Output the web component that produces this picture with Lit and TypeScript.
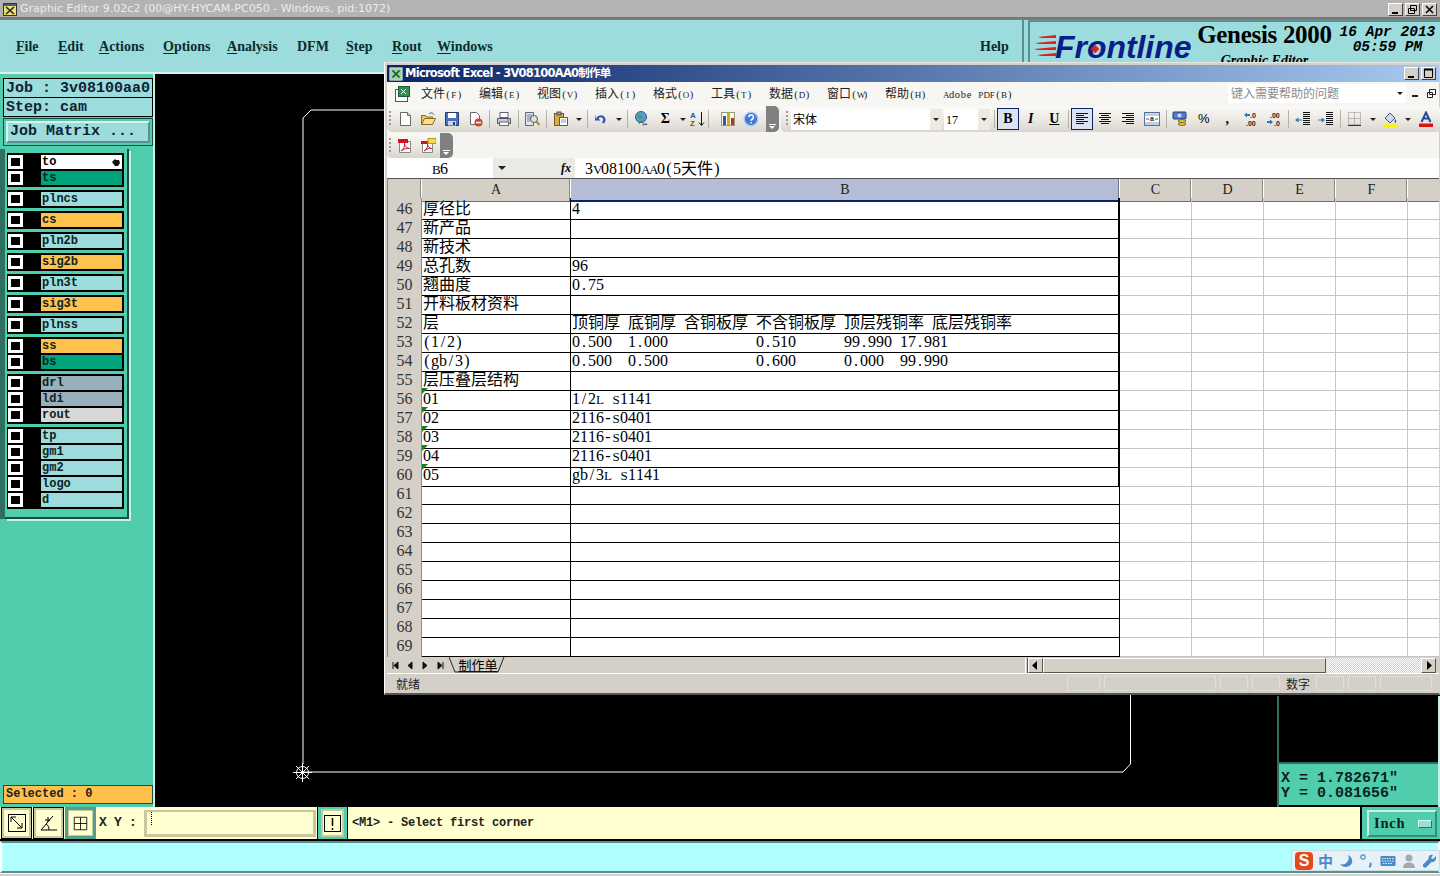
import { css, html, LitElement, svg } from "lit";
import { customElement } from "lit/decorators.js";

const CJK = /[\u3000-\u9fff\uff00-\uffef]+/g;

// split mixed text, latin goes in half-width cells like the sheet's bitmap font
function runs(text: string) {
	const out: unknown[] = [];
	// capitals are too wide for a half cell at full size
	const latin = (s: string) =>
		[...s].map((c) => html`<span class="ch ${/[A-Z]/.test(c) ? "cap" : ""}">${c}</span>`);
	let last = 0;
	for (const m of text.matchAll(CJK)) {
		if (m.index! > last) out.push(latin(text.slice(last, m.index)));
		out.push(html`<span>${m[0]}</span>`);
		last = m.index! + m[0].length;
	}
	if (last < text.length) out.push(latin(text.slice(last)));
	return out;
}

type Layer = { name: string; color: string };

const LAYER_GROUPS: Layer[][] = [
	[{ name: "to", color: "white" }, { name: "ts", color: "green" }],
	[{ name: "plncs", color: "cyan" }],
	[{ name: "cs", color: "orange" }],
	[{ name: "pln2b", color: "cyan" }],
	[{ name: "sig2b", color: "orange" }],
	[{ name: "pln3t", color: "cyan" }],
	[{ name: "sig3t", color: "orange" }],
	[{ name: "plnss", color: "cyan" }],
	[{ name: "ss", color: "orange" }, { name: "bs", color: "green" }],
	[{ name: "drl", color: "slate" }, { name: "ldi", color: "slate" }, { name: "rout", color: "silver" }],
	[
		{ name: "tp", color: "cyan" },
		{ name: "gm1", color: "cyan" },
		{ name: "gm2", color: "cyan" },
		{ name: "logo", color: "cyan" },
		{ name: "d", color: "cyan" },
	],
];

const SHEET_ROWS: [number, string, string][] = [
	[46, "厚径比", "4"],
	[47, "新产品", ""],
	[48, "新技术", ""],
	[49, "总孔数", "96"],
	[50, "翘曲度", "0.75"],
	[51, "开料板材资料", ""],
	[52, "层", "顶铜厚 底铜厚 含铜板厚 不含铜板厚 顶层残铜率 底层残铜率"],
	[53, "(1/2)", "0.500  1.000           0.510      99.990 17.981"],
	[54, "(gb/3)", "0.500  0.500           0.600      0.000  99.990"],
	[55, "层压叠层结构", ""],
	[56, "01", "1/2L S1141"],
	[57, "02", "2116-S0401"],
	[58, "03", "2116-S0401"],
	[59, "04", "2116-S0401"],
	[60, "05", "gb/3L S1141"],
	[61, "", ""],
	[62, "", ""],
	[63, "", ""],
	[64, "", ""],
	[65, "", ""],
	[66, "", ""],
	[67, "", ""],
	[68, "", ""],
	[69, "", ""],
	[70, "", ""],
];

const ICONS: Record<string, unknown> = {
	book: svg`<rect x="1.500" y="3.500" width="12" height="12" fill="#fff" stroke="#555"/><rect x="4.500" y="0.500" width="11" height="10" fill="#2f8f4f" stroke="#1c5a30"/><path d="M7 3l5 5M12 3l-5 5" stroke="#fff"/>`,
	new: svg`<path d="M3.500 1.500h7l3 3v10h-10z" fill="#fff" stroke="#666"/><path d="M10.500 1.500v3h3" fill="#ddd" stroke="#666"/>`,
	open: svg`<path d="M1.500 13.500v-9h4l1 1.500h6v7.500z" fill="#e8c860" stroke="#8a6d1f"/><path d="M1.500 13.500l3-6h11l-3 6z" fill="#f7e08e" stroke="#8a6d1f"/><path d="M9 3c2-2 4-1 5 1" fill="none" stroke="#2a55a8"/>`,
	save: svg`<path d="M1.500 1.500h13v13h-13z" fill="#4a6fc0" stroke="#23386f"/><rect x="4" y="2" width="8" height="5" fill="#fff"/><rect x="4" y="10" width="8" height="4.500" fill="#c9d5ef"/><rect x="9" y="11" width="2" height="3" fill="#23386f"/>`,
	perm: svg`<path d="M3.500 1.500h6l3 3v9h-9z" fill="#fff" stroke="#667"/><circle cx="11.500" cy="11.500" r="4" fill="#d8402a"/><rect x="9" y="10.800" width="5" height="1.500" fill="#fff"/>`,
	print: svg`<rect x="4" y="1.500" width="8" height="5" fill="#fff" stroke="#667"/><path d="M1.500 7.500h13v5h-13z" fill="#c8ccd4" stroke="#556"/><rect x="3.500" y="11" width="9" height="3.500" fill="#fff" stroke="#667"/><rect x="11" y="8.500" width="2" height="1" fill="#3a9a3a"/>`,
	preview: svg`<path d="M1.500 1.500h8v13h-8z" fill="#dfe5f2" stroke="#667"/><path d="M3 4h5M3 6h5M3 8h5M3 10h3" stroke="#6b7fa8"/><circle cx="10" cy="8" r="3.500" fill="#cfe6fa" stroke="#7a5a20"/><path d="M12.500 10.500l3 3.500" stroke="#b48a2a" stroke-width="2"/>`,
	paste: svg`<rect x="1.500" y="2.500" width="9" height="12" fill="#d9a94a" stroke="#7a5a20"/><rect x="4" y="1" width="4" height="3" fill="#999" stroke="#555"/><path d="M6.500 6.500h8v8h-8z" fill="#fff" stroke="#3b5a9a"/><path d="M8 9h5M8 11h5" stroke="#8a98b8"/>`,
	undo: svg`<path d="M3 8.500a5 5 0 0 1 9-2c1 2 .5 4-1 6l-2-1c1.500-2 1.500-3.500.5-4.500a3 3 0 0 0-4 .5l2 2H2V3z" fill="#2a55b8"/>`,
	web: svg`<circle cx="7" cy="6" r="5.500" fill="#5a9ad8" stroke="#2d5d92"/><path d="M4 3c2 0 2 2 4 2s0 3-2 3-2-2-2-5zM9 1.500c1 1 3 1.500 3 3" fill="#4aa050"/><path d="M5 12.500c1-2 3-2 4-.500M9 14.500c1-2 3-2 4-.500" fill="none" stroke="#5a6a7a" stroke-width="1.600"/>`,
	sort: svg`<text x="0" y="7" font-size="8" font-family="Liberation Sans" font-weight="700" fill="#2a55a8">A</text><text x="0" y="15" font-size="8" font-family="Liberation Sans" font-weight="700" fill="#b03428">Z</text><path d="M11.500 1v13M9 11.500l2.500 3 2.500-3" fill="none" stroke="#111"/>`,
	chart: svg`<rect x="1.500" y="1.500" width="13" height="13" fill="#fffbe0" stroke="#9a9a80"/><rect x="3" y="5" width="3" height="9" fill="#3456b0"/><rect x="7" y="2" width="3" height="12" fill="#d8a82a"/><rect x="11" y="7" width="3" height="7" fill="#b03428"/>`,
	help: svg`<circle cx="8" cy="8" r="6.800" fill="#3f78d8" stroke="#a9c6ee" stroke-width="1.500"/><path d="M5.800 6.300a2.300 2.300 0 1 1 3.300 2c-.8.400-1.100.8-1.100 1.500M8 11v1.500" fill="none" stroke="#fff" stroke-width="1.500"/>`,
	pdf: svg`<path d="M2.500 3.500h11v11h-11z" fill="#fff" stroke="#888"/><rect x="1" y="1" width="10" height="4" fill="#d8101c"/><path d="M4 13c3-2 4-5 3.500-8 0 3 2 5 5 5.500-3-.5-6 .5-8.500 2.500z" fill="none" stroke="#c8202c"/>`,
	pdfc: svg`<path d="M2.500 4.500h10v10h-10z" fill="#fff" stroke="#888"/><rect x="1" y="3" width="8" height="3" fill="#d8101c"/><rect x="8" y="0.500" width="8" height="5" fill="#f6d94a" stroke="#b09a20"/><path d="M4 13c3-2 4-4 3.500-7 0 3 2 4 4 4.500-2-.5-5 .5-7.500 2.500z" fill="none" stroke="#c8202c"/>`,
	left: svg`<path d="M2 2.500h12M2 4.500h8M2 6.500h12M2 8.500h8M2 10.500h12M2 12.500h8" stroke="#111"/>`,
	center: svg`<path d="M2 2.500h12M4 4.500h8M2 6.500h12M4 8.500h8M2 10.500h12M4 12.500h8" stroke="#111"/>`,
	right: svg`<path d="M2 2.500h12M6 4.500h8M2 6.500h12M6 8.500h8M2 10.500h12M6 12.500h8" stroke="#111"/>`,
	merge: svg`<rect x="0.500" y="1.500" width="15" height="13" fill="#bcd0e8" stroke="#5a7498"/><rect x="1" y="5" width="14" height="6" fill="#fff"/><path d="M2 8h3M14 8h-3" stroke="#2a55a8"/><text x="6" y="10" font-size="7" font-family="Liberation Sans" fill="#222">a</text>`,
	currency: svg`<rect x="1" y="1" width="13" height="7" rx="1" fill="#4f7fd0" stroke="#23386f"/><circle cx="7.500" cy="4.500" r="2" fill="#cfe0fa"/><ellipse cx="10" cy="10" rx="4" ry="1.500" fill="#e8bf3a" stroke="#8a6d1f"/><ellipse cx="10" cy="13" rx="4" ry="1.500" fill="#e8bf3a" stroke="#8a6d1f"/>`,
	incdec: svg`<path d="M1 4l3-2.500V3h3v2H4v1.500z" fill="#2a75c8"/><text x="7" y="7" font-size="7" font-family="Liberation Sans" font-weight="700" fill="#222">.0</text><text x="3" y="15" font-size="7" font-family="Liberation Sans" font-weight="700" fill="#222">.00</text>`,
	decdec: svg`<text x="4" y="7" font-size="7" font-family="Liberation Sans" font-weight="700" fill="#222">.00</text><path d="M1 10h3V8.500l3 2.500-3 2.500V12H1z" fill="#2a75c8"/><text x="8" y="15" font-size="7" font-family="Liberation Sans" font-weight="700" fill="#222">.0</text>`,
	outdent: svg`<path d="M8 1.500h7M8 3.500h7M8 5.500h7M8 7.500h7M8 9.500h7M8 11.500h7M8 13.500h7" stroke="#111"/><path d="M7 8.500H3.500v-2L0 9l3.500 2.500v-2H7z" fill="#2a75c8"/>`,
	indent: svg`<path d="M8 1.500h7M8 3.500h7M8 5.500h7M8 7.500h7M8 9.500h7M8 11.500h7M8 13.500h7" stroke="#111"/><path d="M0 8.500h3.500v-2L7 9l-3.500 2.500v-2H0z" fill="#2a75c8"/>`,
	borders: svg`<path d="M1.500 1.500h12v12h-12zM7.500 1.500v12M1.500 7.500h12" fill="none" stroke="#888" stroke-dasharray="1 1"/><path d="M1 14.500h13" stroke="#333"/>`,
	fill: svg`<path d="M3 7l5-5 5 5-5 5z" fill="#cfd8e8" stroke="#3a5a90"/><path d="M13 8c1 1.500 2 2.500 1 3.500s-2-1-1-3.500z" fill="#2a55a8"/><rect x="1" y="13" width="15" height="3" fill="#f5f020"/>`,
	color: svg`<path d="M3.500 11L8 1.500 12.500 11M5.500 7.500h5" fill="none" stroke="#234a9a" stroke-width="2"/><rect x="1" y="12.500" width="14" height="3.500" fill="#e01010"/>`,
};

function icon(name: string) {
	return html`<svg class="ic" viewBox="0 0 16 16">${ICONS[name]}</svg>`;
}

const tool = (name: string) => html`<span class="tb">${icon(name)}</span>`;
const drop = html`<span class="drop"></span>`;
const sep = html`<span class="sep"></span>`;

const minGlyph = html`<svg viewBox="0 0 13 11"><rect x="3" y="8" width="6" height="2" fill="#000" /></svg>`;
const maxGlyph = html`<svg viewBox="0 0 13 11"><path d="M2.500 1.500h8v8h-8z" fill="none" stroke="#000" /><path d="M2 1.500h9" stroke="#000" stroke-width="2" /></svg>`;
const restoreGlyph = html`<svg viewBox="0 0 13 11"><path d="M4.500 1.500h6v5h-6zM2.500 4.500h6v5h-6z" fill="#d4d0c8" stroke="#000" /></svg>`;
const closeGlyph = html`<svg viewBox="0 0 13 11"><path d="M3 2l7 7M10 2l-7 7" stroke="#000" stroke-width="1.500" /></svg>`;

@customElement("app-root")
export class AppRoot extends LitElement {
	static override styles = css`
		:host {
			display: block;
			position: relative;
			width: 1440px;
			height: 876px;
			overflow: hidden;
			background: #d4d0c8;
			font-family: "Liberation Mono", monospace;
		}

		/* Motif shell */
		.title {
			height: 16px;
			background: #b3b3b3;
			border-bottom: 2px solid #777;
			display: flex;
			align-items: center;
			padding: 1px 0 0 3px;
			gap: 3px;
			color: #ececec;
			font: 11.050px/16px "DejaVu Sans", sans-serif;
			box-sizing: content-box;
		}
		.title .sp { flex: 1; }
		.wbtn {
			width: 15px;
			height: 13px;
			box-sizing: border-box;
			background: #d4d0c8;
			border: 1px solid;
			border-color: #fff #444 #444 #fff;
			display: block;
			flex: none;
		}
		.wbtn svg { display: block; width: 13px; height: 11px; }
		.wbtns { display: flex; gap: 2px; padding-right: 3px; }

		.menu {
			height: 52px;
			display: flex;
			background: #9cdcdc;
			border-bottom: 2px solid #d8f2f2;
			border-top: 1px solid #5c9090;
			box-sizing: content-box;
		}
		.menu-items {
			flex: 1;
			display: flex;
			padding: 17px 0 0 16px;
			font: 700 14px/20px "Liberation Serif", serif;
			color: #0c2c2c;
			border-right: 2px solid #5c9090;
			border-left: 2px solid #d8f2f2;
			margin-left: -2px;
		}
		.menu-items span { display: block; }
		.menu-items u { text-underline-offset: 2px; }
		.logo {
			width: 412px;
			margin-left: 4px;
			border-left: 2px solid #5c9090;
			border-top: 2px solid #5c9090;
			box-sizing: border-box;
			display: flex;
			overflow: hidden;
			padding: 3px 0 0 4px;
			color: #000;
		}
		.brand {
			display: flex;
			align-items: center;
			height: 42px;
			margin-top: 1px;
			position: relative;
		}
		.brand b {
			font: italic 700 32px/42px "Liberation Sans", sans-serif;
			color: #0c1d8a;
			letter-spacing: -0.05px;
		}
		.brand svg { width: 22px; height: 24px; margin-right: -1px; }
		.brand .dia {
			position: absolute;
			left: 58px;
			top: 20px;
			width: 6px;
			height: 6px;
			background: #e0201c;
			transform: rotate(45deg);
		}
		.gen { margin-left: 5px; text-align: center; width: 136px; margin-top: -3px; }
		.gen .big { font: 25px/26px "Liberation Serif", serif; white-space: nowrap; font-weight: 700; letter-spacing: -0.3px; }
		.gen .small { font: italic 700 14px/16px "Liberation Serif", serif; margin-top: 5px; }
		.date {
			margin-left: 6px;
			font: italic 700 14.500px/15px "Liberation Mono", monospace;
			text-align: center;
			white-space: pre;
			width: 98px;
		}

		.body { height: 733px; display: flex; }
		.side {
			width: 155px;
			background: #50cdac;
			box-sizing: border-box;
			border-right: 2px solid #c8f0e4;
			display: flex;
			flex-direction: column;
			padding: 4px 0 3px 3px;
		}
		.job {
			width: 150px;
			box-sizing: border-box;
			border: 1px solid #000;
			background: #9cdcdc;
			font: 700 15px/19px "Liberation Mono", monospace;
			color: #123;
			white-space: pre;
		}
		.job div { height: 18px; padding-left: 2px; }
		.job div + div { border-top: 1px solid #000; }
		.matrix {
			width: 150px;
			height: 28px;
			margin-top: 1px;
			box-sizing: border-box;
			border: 1px solid #174f45;
			padding: 2px;
			background: #50cdac;
		}
		.matrix div {
			height: 22px;
			box-sizing: border-box;
			background: #9cdcdc;
			border: 2px solid;
			border-color: #d8f2f2 #5c9090 #5c9090 #d8f2f2;
			font: 700 15px/18px "Liberation Mono", monospace;
			padding-left: 2px;
			color: #123;
			white-space: pre;
		}
		.layers {
			width: 124px;
			height: 370px;
			margin: 3px 0 0 2px;
			box-sizing: border-box;
			border-right: 2px solid #174f45;
			border-bottom: 2px solid #174f45;
			padding: 4px 0 0 2px;
			display: flex;
			flex-direction: column;
			gap: 3px;
			box-shadow: 2px 2px 0 #c8f0e4, -5px 0 0 #2f6f60;
		}
		.group { width: 117px; background: #000; padding-top: 2px; box-sizing: border-box; }
		.layer { height: 16px; display: flex; }
		.chk {
			width: 15px;
			height: 14px;
			margin-left: 1px;
			box-sizing: border-box;
			background: #000;
			border: 3px solid #fff;
		}
		.lname {
			margin-left: 18px;
			width: 81px;
			height: 14px;
			box-sizing: border-box;
			font: 700 12px/14px "Liberation Mono", monospace;
			color: #0b2222;
			padding-left: 1px;
			position: relative;
		}
		.lname.cyan { background: #9cdcdc; }
		.lname.orange { background: #ffc34d; }
		.lname.green { background: #00a47c; }
		.lname.white { background: #fff; color: #000; }
		.lname.slate { background: #98b0bc; }
		.lname.silver { background: #d8d8d8; }
		.lname svg { position: absolute; right: 2px; top: 3px; width: 8px; height: 8px; }
		.selected {
			margin-top: auto;
			width: 150px;
			height: 19px;
			box-sizing: border-box;
			background: #ffc04c;
			border: 1px solid #174f45;
			font: 700 12px/17px "Liberation Mono", monospace;
			color: #222;
			padding-left: 2px;
			white-space: pre;
		}

		.canvas { flex: 1; background: #000; position: relative; }
		.canvas > svg { position: absolute; inset: 0; width: 100%; height: 100%; }
		.readout {
			position: absolute;
			right: 0;
			bottom: 0;
			width: 163px;
			height: 111px;
			box-sizing: border-box;
			border-left: 2px solid #2f6f60;
			border-right: 2px solid #c8f0e4;
			display: flex;
			flex-direction: column;
			justify-content: flex-end;
			background: #000;
			padding-bottom: 2px;
		}
		.readout div {
			height: 43px;
			box-sizing: border-box;
			background: #50cdac;
			border-top: 2px solid #2f6f60;
			padding: 7px 0 0 2px;
			font: 700 15px/15px "Liberation Mono", monospace;
			color: #0b2222;
			white-space: pre;
		}

		.status {
			height: 32px;
			display: flex;
			background: #ffffd0;
			font: 700 12px/32px "Liberation Mono", monospace;
			color: #222;
			white-space: pre;
			align-items: stretch;
		}
		.mbtn {
			width: 31px;
			margin-left: 1px;
			box-sizing: border-box;
			background: #ffffd0;
			border: 3px solid #c8c8a0;
			outline: 1px solid #000;
			outline-offset: -1px;
			padding: 2px;
			display: flex;
			align-items: center;
			justify-content: center;
		}
		.mbtn svg { width: 18px; height: 18px; }
		.mbtn.active { border: 4px solid #c8c8a0; outline: 3px solid #50a090; outline-offset: -3px; padding: 3px; }
		.mbtn.active svg { width: 15px; height: 15px; }
		.xy { width: 47px; font: 700 13px/32px "Liberation Mono", monospace; padding-left: 3px; box-sizing: border-box; letter-spacing: -0.3px; }
		.field {
			width: 172px;
			margin-left: 1px;
			box-sizing: border-box;
			border: 3px solid #c8c8a0;
			border-top: 2px solid #c8c8a0;
			margin-top: 3px;
			margin-bottom: 2px;
			position: relative;
		}
		.field::before {
			content: "";
			position: absolute;
			left: 4px;
			top: 0;
			width: 1px;
			height: 14px;
			background: repeating-linear-gradient(#000 0 1px, transparent 1px 2px);
		}
		.bang {
			width: 31px;
			margin-left: 1px;
			box-sizing: border-box;
			background: #50cdac;
			padding: 2px 3px;
			display: flex;
			border-left: 1px solid #000;
			border-right: 1px solid #000;
		}
		.bang span {
			flex: 1;
			background: #ffffd0;
			display: flex;
			align-items: center;
			justify-content: center;
			border: 2px solid #c8c8a0;
			box-sizing: border-box;
		}
		.bang svg { width: 17px; height: 17px; }
		.msg { flex: 1; padding-left: 4px; letter-spacing: -0.2px; }
		.units {
			width: 80px;
			background: #50cdac;
			box-sizing: border-box;
			border-left: 2px solid #000;
			padding: 3px 3px 2px 5px;
		}
		.units div {
			height: 27px;
			box-sizing: border-box;
			border: 2px solid;
			border-color: #c8f0e4 #2f8f78 #2f8f78 #c8f0e4;
			font: 700 14.500px/23px "Liberation Serif", serif;
			letter-spacing: 0.8px;
			color: #0b2222;
			display: flex;
			justify-content: space-between;
			align-items: center;
			padding: 0 3px 0 5px;
		}
		.units i { display: block; width: 12px; height: 6px; background: #9cdcdc; border: 1px solid; border-color: #e0f8f0 #2f6f60 #2f6f60 #e0f8f0; }

		.strip {
			height: 34px;
			box-sizing: border-box;
			border-top: 2px solid #000;
			background: #b0ffff;
			position: relative;
		}
		.strip-in {
			height: 100%;
			box-sizing: border-box;
			border: 2px solid;
			border-color: #5c9090 #fff #5c9090 #fff;
			box-shadow: 0 1px 0 #fff;
		}
		.ime {
			position: absolute;
			right: 0;
			top: 9px;
			width: 149px;
			height: 21px;
			box-sizing: border-box;
			background: #e6f1f8;
			border: 1px solid #cfdbe4;
			display: flex;
			align-items: center;
			gap: 5px;
			padding-left: 3px;
			color: #4a8ac8;
			font: 700 15px/20px "Noto Sans CJK SC", sans-serif;
		}
		.ime .s {
			width: 18px;
			height: 18px;
			background: #e24a1e;
			border-radius: 4px;
			color: #fff;
			font: 700 16px/18px "Liberation Sans", sans-serif;
			text-align: center;
		}
		.ime svg { width: 16px; height: 16px; }

		/* Excel window */
		.excel {
			position: absolute;
			left: 384px;
			top: 62px;
			width: 1056px;
			height: 633px;
			box-sizing: border-box;
			background: #d4d0c8;
			border: 1px solid #d4d0c8;
			border-top-color: #e8e6e0;
			border-left-color: #fff;
			border-bottom: 2px solid #555;
			padding: 2px 0 0 2px;
			display: flex;
			flex-direction: column;
			font-family: "Liberation Serif", "Noto Sans CJK SC", serif;
			color: #000;
		}
		.ch { display: inline-block; width: 8px; text-align: center; white-space: pre; }
		.ch.cap { font-size: 13px; }
		.ic { width: 16px; height: 16px; display: block; }
		.xtitle {
			height: 17px;
			flex: none;
			background: linear-gradient(90deg, #0a246a, #a6caf0);
			display: flex;
			align-items: center;
			padding-left: 2px;
			gap: 2px;
			color: #fff;
			font: 700 11.500px/17px "DejaVu Sans", "Noto Sans CJK SC", sans-serif;
			letter-spacing: -0.750px;
		}
		.xtitle .ic { width: 14px; height: 14px; }
		.xtitle .sp { flex: 1; }
		.xtitle .gapr { width: 1px; }
		.xmenu {
			height: 23px;
			flex: none;
			background: #f7f6f3;
			display: flex;
			align-items: center;
			padding-left: 3px;
			position: relative;
			font: 12px/23px "Noto Sans CJK SC", sans-serif;
			color: #222;
		}
		.xmenu .bookic { width: 20px; margin-right: 7px; margin-left: 4px; }
		.xmenu .it { width: 58px; flex: none; white-space: pre; }
		.xmenu .ch { width: 5.800px; font: 10.500px/23px "Liberation Serif", serif; }
		.xmenu .ch.cap { font-size: 9px; }
		.ask {
			position: absolute;
			left: 841px;
			top: 2px;
			width: 178px;
			height: 19px;
			background: #fff;
			color: #8a8a8a;
			font: 12px/18px "Noto Sans CJK SC", sans-serif;
			padding-left: 3px;
			box-sizing: border-box;
		}
		.mdi { position: absolute; left: 1010px; top: 4px; display: flex; gap: 9px; align-items: center; height: 14px; }
		.bars {
			height: 28px;
			flex: none;
			background: #f5f4f0;
			display: flex;
			gap: 2px;
			padding-top: 1px;
			box-sizing: border-box;
		}
		.bar {
			height: 26px;
			display: flex;
			align-items: center;
			background: linear-gradient(#fafaf8, #e6e3dc 70%, #d8d5cd);
			border-radius: 5px;
			padding-left: 2px;
			flex: none;
			box-sizing: border-box;
		}
		.grip { width: 2px; height: 16px; margin-right: 2px; flex: none; background: repeating-linear-gradient(#9a9a9a 0 2px, transparent 2px 4px); }
		.tb { width: 23.500px; height: 22px; display: flex; align-items: center; justify-content: center; flex: none; box-sizing: border-box; font: 700 14px/20px "Liberation Serif", serif; }
		.tb.on { width: 22px; border: 1px solid #0a246a; background: #dbe2f0; }
		.tb.nar { width: 17px; }
		.drop { width: 0; height: 0; border: 3px solid transparent; border-top: 3px solid #222; border-bottom: 0; margin: 0 3px; flex: none; }
		.sep { width: 1px; height: 18px; background: #b4b1a8; margin: 0 2px; flex: none; }
		.more { width: 13px; height: 26px; margin-left: auto; background: #808080; border-radius: 0 5px 5px 0; position: relative; flex: none; }
		.more::after { content: ""; position: absolute; left: 3px; bottom: 7px; width: 7px; height: 1px; background: #fff; }
		.more::before { content: ""; position: absolute; left: 3px; bottom: 3px; border: 3.500px solid transparent; border-top-color: #fff; border-bottom: 0; }
		.combo {
			height: 21px;
			background: #fff;
			display: flex;
			align-items: center;
			justify-content: space-between;
			box-sizing: border-box;
			padding-left: 2px;
			font: 12px/20px "Noto Sans CJK SC", sans-serif;
			flex: none;
			margin-right: 2px;
		}
		.combo .ch { width: 6px; font: 12px/20px "Liberation Serif", serif; }
		.combo .btn { width: 12px; height: 21px; background: #eeeae2; display: flex; align-items: center; justify-content: center; }
		.combo .drop { margin: 0; }
		.bars2 {
			height: 25px;
			flex: none;
			background: #f5f4f0;
			display: flex;
		}
		.bars2 .bar { height: 25px; width: 66px; }
		.fx {
			height: 20px;
			flex: none;
			display: flex;
			background: #ebe9e3;
			font: 16px/21px "Liberation Serif", "Noto Sans CJK SC", serif;
			white-space: pre;
		}
		.fx .name { width: 106px; background: #fff; text-align: center; box-sizing: border-box; }
		.fx .dd { width: 18px; display: flex; align-items: center; justify-content: center; }
		.fx .fn { font: italic 700 12px/21px "Liberation Serif", serif; text-align: right; padding-right: 4px; box-sizing: border-box; width: 64px; }
		.fx .val { flex: 1; background: #fff; padding-left: 10px; }

		.sheet {
			height: 479px;
			flex: none;
			overflow: hidden;
			background: #fff;
			border-top: 1px solid #555;
			border-left: 1px solid #888;
			box-sizing: border-box;
			font: 16px/21px "Liberation Serif", "Noto Sans CJK SC", serif;
		}
		.hdr, .row { display: grid; grid-template-columns: 34px 149px 549px 72px 72px 72px 72px 36px; height: 19px; box-sizing: border-box; }
		.hdr > div {
			background: #d4d0c8;
			text-align: center;
			border-right: 1px solid #fff;
			box-shadow: inset -1px 0 0 #8a8a8a;
			border-bottom: 1px solid #6f6f6f;
			box-sizing: border-box;
			font-size: 14px;
			line-height: 21px;
			color: #222;
		}
		.hdr > .sel { background: #b4bcd6; border-bottom: 2px solid #0a246a; box-shadow: inset -1px 0 0 #6f7690; }
		.row > div { box-sizing: border-box; border-right: 1px solid #c6c6c6; border-bottom: 1px solid #c6c6c6; position: relative; }
		.row > .rh {
			background: #d4d0c8;
			text-align: center;
			border-right: 1px solid #8a8a8a;
			border-bottom: 1px solid #a8a59c;
			color: #333;
		}
		.row > .a, .row > .b { border-bottom: 1px solid #000; border-right: 1px solid #000; padding-left: 1px; white-space: pre; }
		.row > .b.lined { border-right: 2px solid #000; }
		.note::before {
			content: "";
			position: absolute;
			left: 0;
			top: 0;
			border: 3px solid transparent;
			border-top-color: #1a7f1a;
			border-left-color: #1a7f1a;
		}

		.tabs {
			height: 17px;
			flex: none;
			display: flex;
			align-items: center;
			background: #d4d0c8;
			border-bottom: 1px solid #fff;
			box-sizing: border-box;
		}
		.nav { width: 62px; display: flex; align-items: center; padding-left: 4px; box-sizing: border-box; flex: none; }
		.nav svg { width: 54px; height: 9px; }
		.tab {
			width: 58px;
			height: 16px;
			flex: none;
			position: relative;
			font: 13px/15px "Noto Sans CJK SC", sans-serif;
			text-align: center;
			text-decoration: underline;
		}
		.tab svg { position: absolute; inset: 0; width: 58px; height: 16px; }
		.tabfill { width: 518px; flex: none; }
		.splitter { width: 3px; height: 15px; border-left: 1px solid #fff; border-right: 1px solid #555; flex: none; box-sizing: border-box; }
		.arr { width: 15px; height: 15px; box-sizing: border-box; background: #d4d0c8; border: 1px solid; border-color: #fff #555 #555 #fff; display: flex; align-items: center; justify-content: center; flex: none; }
		.arr svg { width: 7px; height: 9px; }
		.thumb { width: 283px; height: 15px; box-sizing: border-box; background: #d4d0c8; border: 1px solid; border-color: #fff #555 #555 #fff; flex: none; }
		.track { width: 95px; height: 15px; flex: none; background: repeating-conic-gradient(#d4d0c8 0 25%, #fff 0 50%) 0 0 / 2px 2px; }

		.xstatus {
			flex: 1;
			min-height: 0;
			display: flex;
			align-items: center;
			font: 12px/15px "Noto Sans CJK SC", sans-serif;
			color: #222;
		}
		.xstatus .ready { width: 680px; padding-left: 9px; flex: none; box-sizing: border-box; }
		.cell { height: 15px; border: 1px solid #e0ddd5; box-sizing: border-box; margin-right: 4px; flex: none; text-align: center; line-height: 13px; }
		.cell.plain { border-color: transparent; }
	`;

	private renderLayer(l: Layer) {
		return html`<div class="layer">
			<span class="chk"></span>
			<span class="lname ${l.color}"
				>${l.name}${l.name === "to"
					? html`<svg viewBox="0 0 8 8"><path d="M0 4l3-3 1 1 3 0 1 3-2 3H3z" fill="#111" /></svg>`
					: ""}</span
			>
		</div>`;
	}

	private renderExcel() {
		const menus = ["文件(F)", "编辑(E)", "视图(V)", "插入(I)", "格式(O)", "工具(T)", "数据(D)", "窗口(W)", "帮助(H)"];
		const heads = ["", "A", "B", "C", "D", "E", "F", ""];
		return html`<div class="excel">
			<div class="xtitle">
				<svg class="ic" viewBox="0 0 16 16"><rect x="1" y="1" width="14" height="14" fill="#9fd0a8" stroke="#d8e8d8" /><path d="M4 4l8 8M12 4l-8 8" stroke="#0f5a2f" stroke-width="2" /></svg>
				<span>Microsoft Excel - 3V08100AA0制作单</span>
				<span class="sp"></span>
				<span class="wbtn">${minGlyph}</span><span class="wbtn">${maxGlyph}</span><span class="gapr"></span>
			</div>
			<div class="xmenu">
				<span class="bookic">${icon("book")}</span>
				${menus.map((m) => html`<span class="it">${runs(m)}</span>`)}
				<span class="it" style="width:auto">${runs("Adobe PDF(B)")}</span>
				<span class="ask">键入需要帮助的问题</span>
				<span class="mdi"
					><span class="drop" style="margin:0"></span><span style="width:6px;height:2px;background:#222;margin-top:6px"></span
					><svg viewBox="0 0 9 9" width="9" height="9"><path d="M2.500.500h6v5h-6zM.500 3.500h5v5h-5z" fill="#fff" stroke="#222" /></svg
				></span>
			</div>
			<div class="bars">
				<div class="bar" style="width:392px">
					<span class="grip"></span>
					${tool("new")}${tool("open")}${tool("save")}${tool("perm")}${sep}${tool("print")}${sep}${tool("preview")}${sep}${tool("paste")}${drop}${sep}${tool("undo")}${drop}${sep}${tool("web")}
					<span class="tb">Σ</span>${drop}<span class="tb nar">${icon("sort")}</span>${sep}<span style="width:5px"></span>${tool("chart")}${tool("help")}
					<span class="more"></span>
				</div>
				<div class="bar" style="width:660px;padding-left:5px">
					<span class="grip" style="margin-right:3px"></span>
					<span class="combo" style="width:151px"><span>宋体</span><span class="btn"><span class="drop"></span></span></span>
					<span class="combo" style="width:46px"><span>${runs("17")}</span><span class="btn"><span class="drop"></span></span></span>
					${sep}
					<span class="tb on">B</span>
					<span class="tb" style="font-style:italic">I</span>
					<span class="tb" style="text-decoration:underline">U</span>
					${sep}
					<span class="tb on">${icon("left")}</span>${tool("center")}${tool("right")}${tool("merge")}${sep}${tool("currency")}
					<span class="tb" style="font:13px/20px 'Liberation Sans',sans-serif">%</span>
					<span class="tb">,</span>
					${tool("incdec")}${tool("decdec")}${sep}${tool("outdent")}${tool("indent")}${sep}${tool("borders")}${drop}${tool("fill")}${drop}${tool("color")}${drop}
				</div>
			</div>
			<div class="bars2">
				<div class="bar"><span class="grip"></span>${tool("pdf")}${tool("pdfc")}<span class="more" style="height:25px"></span></div>
			</div>
			<div class="fx">
				<span class="name">${runs("B6")}</span>
				<span class="dd"><span class="drop" style="border-width:4px 4px 0;margin:0"></span></span>
				<span class="fn">fx</span>
				<span class="val">${runs("3V08100AA0(5天件)")}</span>
			</div>
			<div class="sheet">
				<div class="hdr">
					${heads.map((h, i) => html`<div class=${i === 2 ? "sel" : ""}>${h}</div>`)}
				</div>
				${SHEET_ROWS.map(([n, a, b]) => html`<div class="row">
					<div class="rh">${n < 70 ? runs(String(n)) : ""}</div>
					<div class="a ${n >= 56 && n <= 60 ? "note" : ""}">${runs(a)}</div>
					<div class="b ${n <= 60 ? "lined" : ""}">${runs(b)}</div>
					<div></div><div></div><div></div><div></div><div></div>
				</div>`)}
			</div>
			<div class="tabs">
				<span class="nav"><svg viewBox="0 0 54 9"><path d="M2 1v7M7 1L3 4.500 7 8zM21 1l-4 3.500 4 3.500zM32 1l4 3.500-4 3.500zM47 1l4 3.500-4 3.500zM52 1v7" stroke="#111" fill="#111" /></svg></span>
				<span class="tab">
					<svg viewBox="0 0 58 16"><path d="M0 0l6 15h43l6-15" fill="none" stroke="#222" /></svg>
					制作单
				</span>
				<span class="tabfill"></span>
				<span class="splitter"></span>
				<span class="arr"><svg viewBox="0 0 7 9"><path d="M5 0v9L0 4.500z" fill="#000" /></svg></span>
				<span class="thumb"></span>
				<span class="track"></span>
				<span class="arr"><svg viewBox="0 0 7 9"><path d="M2 0v9l5-4.500z" fill="#000" /></svg></span>
			</div>
			<div class="xstatus">
				<span class="ready">就绪</span>
				<span class="cell" style="width:33px"></span>
				<span class="cell" style="width:112px"></span>
				<span class="cell" style="width:28px"></span>
				<span class="cell" style="width:28px"></span>
				<span class="cell plain" style="width:28px">数字</span>
				<span class="cell" style="width:28px"></span>
				<span class="cell" style="width:28px"></span>
				<span class="cell" style="width:52px"></span>
			</div>
		</div>`;
	}

	override render() {
		return html`
			<div class="title">
				<svg width="14" height="13" viewBox="0 0 14 13"><rect x=".5" y=".5" width="13" height="12" fill="#e8e070" stroke="#333" /><rect x="1" y="1" width="12" height="2" fill="#557" /><path d="M3 4l8 7M11 4l-8 7" stroke="#222" stroke-width="1.600" /></svg>
				<span>Graphic Editor 9.02c2 (00@HY-HYCAM-PC050 - Windows, pid:1072)</span>
				<span class="sp"></span>
				<span class="wbtns"><span class="wbtn">${minGlyph}</span><span class="wbtn">${restoreGlyph}</span><span class="wbtn">${closeGlyph}</span></span>
			</div>
			<div class="menu">
				<div class="menu-items">
					<span style="width:42px"><u>F</u>ile</span>
					<span style="width:41px"><u>E</u>dit</span>
					<span style="width:64px"><u>A</u>ctions</span>
					<span style="width:64px"><u>O</u>ptions</span>
					<span style="width:70px"><u>A</u>nalysis</span>
					<span style="width:49px">DFM</span>
					<span style="width:46px"><u>S</u>tep</span>
					<span style="width:45px"><u>R</u>out</span>
					<span style="width:543px"><u>W</u>indows</span>
					<span>Help</span>
				</div>
				<div class="logo">
					<div class="brand">
						<svg viewBox="0 0 22 24"><path d="M4 2l18-2v3H8zM1 8l21-2v3H5zM0 14l22-2v3H4zM3 20l19-2v3H7z" fill="#e0201c" /></svg>
						<b>Frontline</b>
						<span class="dia"></span>
					</div>
					<div class="gen"><div class="big">Genesis 2000</div><div class="small">Graphic Editor</div></div>
					<div class="date">16 Apr 2013
05:59 PM</div>
				</div>
			</div>
			<div class="body">
				<div class="side">
					<div class="job"><div>Job : 3v08100aa0</div><div>Step: cam</div></div>
					<div class="matrix"><div>Job Matrix ...</div></div>
					<div class="layers">
						${LAYER_GROUPS.map((g) => html`<div class="group">${g.map((l) => this.renderLayer(l))}</div>`)}
					</div>
					<div class="selected">Selected : 0</div>
				</div>
				<div class="canvas">
					<svg viewBox="155 74 1285 733">
						<path d="M303 764V118l8-8H1123l7.500 7.500V764l-7.500 8H303" fill="none" stroke="#fff" />
						<g stroke="#fff" fill="none">
							<circle cx="302.500" cy="772.500" r="6" />
							<path d="M293 772.500h19M302.500 763v19M296 766l13 13M309 766l-13 13" />
						</g>
					</svg>
					<div class="readout"><div>X = 1.782671"
Y = 0.081656"</div></div>
				</div>
			</div>
			<div class="status">
				<span class="mbtn"><svg viewBox="0 0 18 18"><rect x=".5" y=".5" width="17" height="17" fill="none" stroke="#000" /><path d="M3 3l11 11M3 3h5M3 3v5M14 14H9M14 14V9" fill="none" stroke="#000" /></svg></span>
				<span class="mbtn"><svg viewBox="0 0 18 18"><path d="M1 16h16M1 16L13 2M9 16c0-3-1-5-3-6M8 3v5M5 6h5" fill="none" stroke="#000" /></svg></span>
				<span class="mbtn active"><svg viewBox="0 0 18 18"><path d="M1.500 1.500h15v15h-15zM9 1.500v15M1.500 9h15" fill="none" stroke="#000" /></svg></span>
				<span class="xy">X Y :</span>
				<span class="field"></span>
				<span class="bang"><span><svg viewBox="0 0 17 17"><rect x=".5" y=".5" width="16" height="16" fill="none" stroke="#000" /><path d="M8.500 3v8M8.500 13v2" stroke="#000" stroke-width="1.500" /></svg></span></span>
				<span class="msg">&lt;M1&gt; - Select first corner</span>
				<span class="units"><div>Inch<i></i></div></span>
			</div>
			<div class="strip">
				<div class="strip-in"></div>
				<div class="ime">
					<span class="s">S</span>
					<span>中</span>
					<svg viewBox="0 0 16 16"><path d="M10 2a6.500 6.500 0 0 1-8 9 7 7 0 0 0 12-1c1-3-1-7-4-8z" fill="#4a8ac8" /></svg>
					<svg viewBox="0 0 16 16"><circle cx="4" cy="4" r="2.200" fill="none" stroke="#4a8ac8" stroke-width="1.200" /><path d="M11 10c1 1 1 3-1 4" fill="none" stroke="#4a8ac8" stroke-width="2" /></svg>
					<svg viewBox="0 0 16 16"><rect x=".5" y="3" width="15" height="10" rx="1" fill="#4a8ac8" /><path d="M2 5.500h12M2 8h12M3 10.500h10" stroke="#e6f1f8" stroke-dasharray="1.500 1" /></svg>
					<svg viewBox="0 0 16 16"><circle cx="8" cy="5" r="3.500" fill="#a8a8a8" /><path d="M2 15c0-4 3-5.500 6-5.500s6 1.500 6 5.500z" fill="#a8a8a8" /></svg>
					<svg viewBox="0 0 16 16"><path d="M14 3l-3 3-2-1 2-3c-3-1-5 1-4.500 4L1 11.500c-1 2 1.500 4 3 3L9.500 9c3 .5 5-2 4.500-6z" fill="#4a8ac8" /></svg>
				</div>
			</div>
			${this.renderExcel()}
		`;
	}
}
